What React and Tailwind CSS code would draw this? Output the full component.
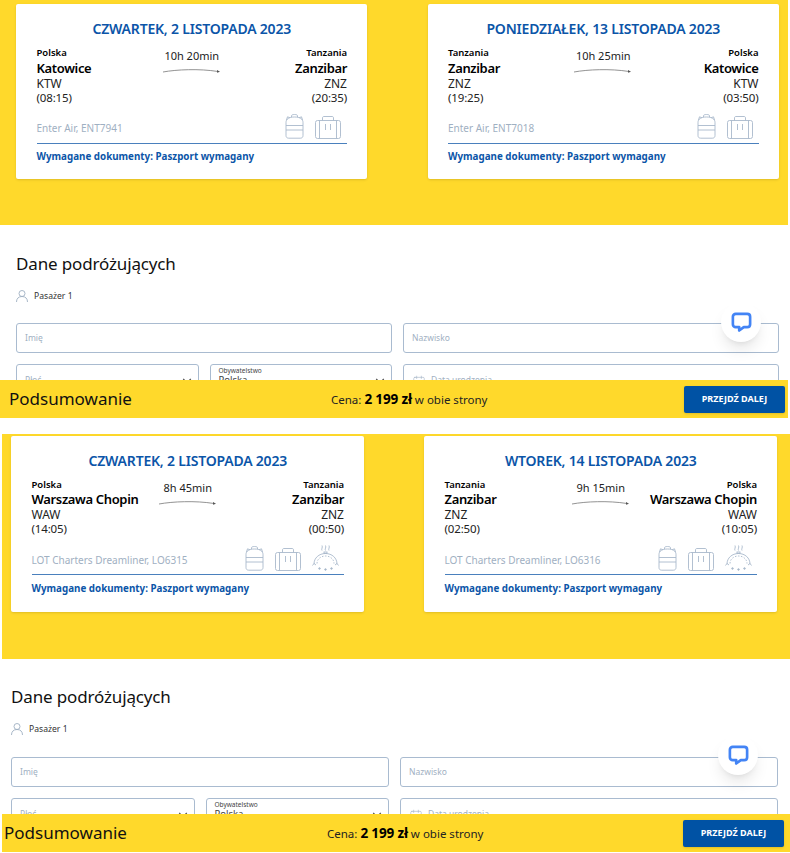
import { Calendar, ChevronDown } from 'lucide-react'

const firstPanel = {
  outer: 'ml-0',
  cardsRow: 'pt-[4px] pl-[16px] gap-[60.500px]',
  cardWidth: 'w-[351px] h-[175px]',
  heading: 'pt-[27px] pl-[16px]',
  fields: 'mt-[19px] pl-[16px] pr-[9px]',
  chat: 'top-[302px] right-[27px]',
  barLabel: 'w-[331px] pl-[9px]',
  barButton: 'pr-[3px]',
  legs: [
    {
      date: 'CZWARTEK, 2 LISTOPADA 2023',
      from: { country: 'Polska', city: 'Katowice', code: 'KTW', time: '(08:15)' },
      to: { country: 'Tanzania', city: 'Zanzibar', code: 'ZNZ', time: '(20:35)' },
      duration: '10h 20min',
      carrier: 'Enter Air, ENT7941',
    },
    {
      date: 'PONIEDZIAŁEK, 13 LISTOPADA 2023',
      from: { country: 'Tanzania', city: 'Zanzibar', code: 'ZNZ', time: '(19:25)' },
      to: { country: 'Polska', city: 'Katowice', code: 'KTW', time: '(03:50)' },
      duration: '10h 25min',
      carrier: 'Enter Air, ENT7018',
    },
  ],
}

const secondPanel = {
  outer: 'ml-[2px] mt-[16px]',
  cardsRow: 'pt-[1.500px] pl-[9px] gap-[60px]',
  cardWidth: 'w-[353px] h-[176px]',
  heading: 'pt-[26px] pl-[9px]',
  fields: 'mt-[20px] pl-[9px] pr-[12px]',
  meal: true,
  chat: 'top-[301px] right-[32px]',
  barLabel: 'w-[325px] pl-[2px]',
  barButton: 'pr-[6px]',
  legs: [
    {
      date: 'CZWARTEK, 2 LISTOPADA 2023',
      from: { country: 'Polska', city: 'Warszawa Chopin', code: 'WAW', time: '(14:05)' },
      to: { country: 'Tanzania', city: 'Zanzibar', code: 'ZNZ', time: '(00:50)' },
      duration: '8h 45min',
      carrier: 'LOT Charters Dreamliner, LO6315',
    },
    {
      date: 'WTOREK, 14 LISTOPADA 2023',
      from: { country: 'Tanzania', city: 'Zanzibar', code: 'ZNZ', time: '(02:50)' },
      to: { country: 'Polska', city: 'Warszawa Chopin', code: 'WAW', time: '(10:05)' },
      duration: '9h 15min',
      carrier: 'LOT Charters Dreamliner, LO6316',
    },
  ],
}

function Backpack() {
  return (
    <svg width="19" height="25" viewBox="0 0 19 25" fill="none" stroke="#a9b9cc" strokeWidth=".9">
      <path d="M1 8.500C1 5 4 3 9.500 3S18 5 18 8.500V21.500c0 1.700-1 2.700-2.700 2.700H3.700C2 24.200 1 23.200 1 21.500z" />
      <path d="M6.500 3V1.800C6.500 1 7.500.5 9.500.5s3 .5 3 1.300V3" />
      <path d="M1.500 6 2.500 2.800 5 3.800M17.500 6l-1-3.200-2.500 1" />
      <path d="M1 11.500h17M1 16h17" />
    </svg>
  )
}

function Suitcase() {
  return (
    <svg width="26" height="23" viewBox="0 0 26 23" fill="none" stroke="#a9b9cc" strokeWidth=".9">
      <rect x="0.500" y="4.500" width="25" height="18" rx="2" />
      <path d="M7.500 4.500V2c0-1 .5-1.500 1.500-1.500h8c1 0 1.500.5 1.500 1.500v2.500" />
      <path d="M4.500 4.500v18M21.500 4.500v18M10.500 8v6M15.500 8v6" />
    </svg>
  )
}

function Meal() {
  return (
    <svg className="-mr-[1px]" width="27" height="27" viewBox="0 0 27 27" fill="none" stroke="#a9b9cc" strokeWidth=".9">
      <path d="M2 20C2 14 7 9.500 13.500 9.500S25 14 25 20" />
      <path d="M5 19.500C5 15 9 12 13.500 12S22 15 22 19.500" strokeDasharray="1.500 1.500" />
      <path d="M10 6.500c-1-1.500 1-3 0-5M13.500 6.500c-1-1.500 1-3 0-5M17 6.500c-1-1.500 1-3 0-5" />
      <rect x="12" y="8" width="3" height="1.500" />
      <path d="M.5 21.500 2 19.500l2 1.500M23 21l2-1.500 1.500 2" />
      <circle cx="7.500" cy="24.500" r=".8" fill="#a9b9cc" />
      <circle cx="13.500" cy="25.500" r=".8" fill="#a9b9cc" />
      <circle cx="19.500" cy="24.500" r=".8" fill="#a9b9cc" />
    </svg>
  )
}

function FlightLine() {
  return (
    <svg width="58" height="6" viewBox="0 0 58 6" fill="none">
      <path d="M0 4C14 1.500 36 .5 55 3.500" stroke="#777" strokeWidth=".8" />
      <path d="M54 2l3 1.800-3 1z" fill="#555" />
    </svg>
  )
}

function Place({ place, right }) {
  return (
    <div className={right ? 'text-right' : ''}>
      <div className="text-[9.500px] leading-[14px] font-semibold text-black">{place.country}</div>
      <div className="text-[13px] leading-[16px] -mt-[0.500px] font-semibold tracking-[-0.35px] text-black">{place.city}</div>
      <div className="text-[12px] leading-[14px] mt-[1px] text-[#222]">{place.code}</div>
      <div className="text-[11.500px] leading-[14px] tracking-[-0.15px] text-[#222]">{place.time}</div>
    </div>
  )
}

function FlightCard({ leg, size, meal }) {
  return (
    <div className={`${size} shrink-0 bg-white rounded-[2px] pl-[20.500px] pr-[20px] pt-[15px] shadow-sm`}>
      <div className="text-center text-[14px] leading-[20px] font-semibold tracking-[-0.2px] text-[#0b55a8]">{leg.date}</div>
      <div className="relative flex justify-between mt-[7px]">
        <Place place={leg.from} />
        <div className="absolute left-1/2 top-[2px] -translate-x-1/2 flex flex-col items-center">
          <span className="text-[11px] leading-[16px] text-[#222] whitespace-nowrap">{leg.duration}</span>
          <span className="mt-[4px] flex"><FlightLine /></span>
        </div>
        <Place place={leg.to} right />
      </div>
      <div className="flex items-end justify-between h-[31.500px] mt-[7.500px] pb-[3.500px] border-b border-[#4a80bd]">
        <span className="text-[10px] leading-[16px] pb-[3px] text-[#9fb0c2]">{leg.carrier}</span>
        <div className="flex items-end gap-[11px] pr-[6px]">
          <Backpack />
          <Suitcase />
          {meal && <Meal />}
        </div>
      </div>
      <div className="mt-[5.500px] text-[9.800px] leading-[16px] font-bold text-[#0b55a8]">
        Wymagane dokumenty: Paszport wymagany
      </div>
    </div>
  )
}

function Field({ children }) {
  return <div className="relative border border-[#a9bbd0] rounded-[3px] h-[30px] min-w-0">{children}</div>
}

function ChatBubble({ position }) {
  return (
    <div className={`absolute ${position} w-[40px] h-[40px] rounded-full bg-white shadow-lg flex items-center justify-center`}>
      <svg width="23" height="23" viewBox="0 0 20 20" fill="none">
        <path
          d="M5 2.500h10c1.500 0 2.500 1 2.500 2.500v6.500c0 1.500-1 2.500-2.500 2.500h-3l-4 3v-3H5c-1.500 0-2.500-1-2.500-2.500V5c0-1.500 1-2.500 2.500-2.500z"
          stroke="#4384f5"
          strokeWidth="2.300"
          strokeLinejoin="round"
        />
      </svg>
    </div>
  )
}

function Panel({ data }) {
  return (
    <div className={`${data.outer} w-[788px] h-[418px] flex flex-col bg-white`}>
      <div className="relative flex-1 overflow-hidden">
        <div className={`h-[225px] bg-[#ffd92b] flex items-start ${data.cardsRow}`}>
          {data.legs.map((leg) => (
            <FlightCard key={leg.date} leg={leg} size={data.cardWidth} meal={data.meal} />
          ))}
        </div>
        <div className={data.heading}>
          <h2 className="text-[17px] leading-[24px] tracking-[-0.15px] text-[#111]">Dane podróżujących</h2>
          <div className="flex items-center gap-[6px] mt-[12px] h-[16px]">
            <svg width="12" height="12" viewBox="0 0 12 12" fill="none" stroke="#9fb0c2" strokeWidth=".9">
              <circle cx="6" cy="3.500" r="3" />
              <path d="M.5 12c0-3.500 2-5.500 5.500-5.500s5.500 2 5.500 5.500" />
            </svg>
            <span className="text-[8.600px] text-[#333]">Pasażer 1</span>
          </div>
        </div>
        <div className={`flex flex-col gap-[11px] ${data.fields}`}>
          <div className="grid grid-cols-2 gap-[11px]">
            <Field>
              <span className="absolute left-[8px] top-[7.500px] text-[8.500px] text-[#9fb0c2]">Imię</span>
            </Field>
            <Field>
              <span className="absolute left-[8px] top-[7.500px] text-[8.500px] text-[#9fb0c2]">Nazwisko</span>
            </Field>
          </div>
          <div className="grid grid-cols-2 gap-[11px]">
            <div className="grid grid-cols-2 gap-[11px]">
              <Field>
                <span className="absolute left-[8px] top-[9px] text-[8.500px] text-[#9fb0c2]">Płeć</span>
                <ChevronDown className="absolute right-[4px] top-[9px] w-[14px] h-[14px] text-[#555]" />
              </Field>
              <Field>
                <span className="absolute left-[8px] top-[1px] text-[6.500px] leading-[9px] text-[#444]">Obywatelstwo</span>
                <span className="absolute left-[8px] top-[8px] text-[9.500px] leading-[14px] text-[#444]">Polska</span>
                <ChevronDown className="absolute right-[4px] top-[9px] w-[14px] h-[14px] text-[#555]" />
              </Field>
            </div>
            <Field>
              <Calendar className="absolute left-[8px] top-[10px] w-[14px] h-[14px] text-[#9fb0c2]" strokeWidth={1} />
              <span className="absolute left-[27px] top-[9px] text-[8.500px] text-[#9fb0c2]">Data urodzenia</span>
            </Field>
          </div>
        </div>
        <ChatBubble position={data.chat} />
      </div>
      <div className="h-[38px] shrink-0 bg-[#ffd92b] flex items-center">
        <span className={`${data.barLabel} shrink-0 text-[17px] text-[#111]`}>Podsumowanie</span>
        <span className="text-[11.500px] text-[#222]">
          Cena: <b className="text-[13.500px] font-bold tracking-[-0.15px] text-black">2 199 zł</b> w obie strony
        </span>
        <div className={`flex flex-1 justify-end ${data.barButton}`}>
          <button className="w-[101px] h-[27px] rounded-[2px] bg-[#0052a4] text-white text-[9px] font-bold shadow-sm">
            PRZEJDŹ DALEJ
          </button>
        </div>
      </div>
    </div>
  )
}

export default function App() {
  return (
    <div className="w-[790px] h-[853px] overflow-hidden bg-white font-['Noto_Sans',sans-serif]">
      <Panel data={firstPanel} />
      <Panel data={secondPanel} />
    </div>
  )
}
